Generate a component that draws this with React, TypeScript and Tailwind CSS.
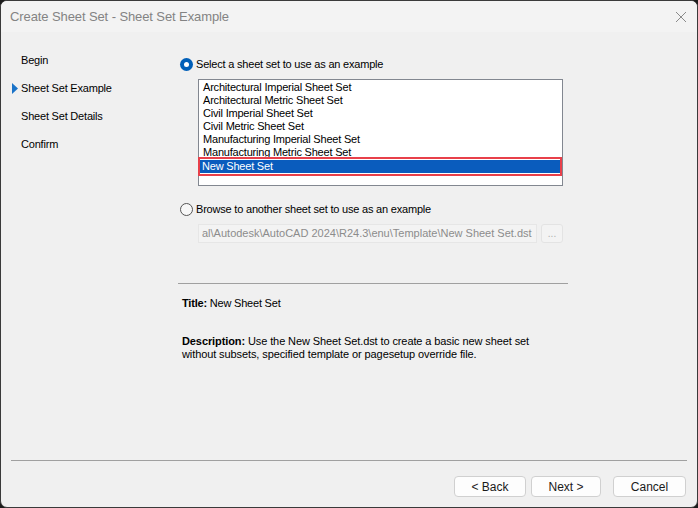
import React from "react";

const items = [
  "Architectural Imperial Sheet Set",
  "Architectural Metric Sheet Set",
  "Civil Imperial Sheet Set",
  "Civil Metric Sheet Set",
  "Manufacturing Imperial Sheet Set",
  "Manufacturing Metric Sheet Set",
  "New Sheet Set",
];

const steps = ["Begin", "Sheet Set Example", "Sheet Set Details", "Confirm"];

function Radio({ checked }: { checked?: boolean }) {
  if (checked) {
    return (
      <span className="w-[13px] h-[13px] rounded-full bg-[#005fb8] flex items-center justify-center shrink-0">
        <span className="w-[5px] h-[5px] rounded-full bg-white" />
      </span>
    );
  }
  return <span className="w-[13px] h-[13px] rounded-full border border-[#555] bg-[#f7f7f7] shrink-0" />;
}

function Btn({ w, children }: { w: string; children: React.ReactNode }) {
  return (
    <button
      className={`${w} h-[21px] rounded-[4px] border border-[#d0d0d0] bg-[#fdfdfd] text-[12px] text-[#1a1a1a] flex items-center justify-center`}
    >
      {children}
    </button>
  );
}

export default function App() {
  return (
    <div
      className="w-[698px] h-[508px] bg-[#1c1c1c] overflow-hidden"
      style={{ fontFamily: '"Liberation Sans", Arial, sans-serif' }}
    >
      <div className="w-full h-full rounded-[7px] border border-[#3a3a3a] bg-[#f0f0f0] flex flex-col overflow-hidden">
        <div className="h-[31px] bg-[#f3f3f3] flex items-center justify-between pl-[9px] pr-[8px] shrink-0">
          <span className="text-[13px] text-[#838383] tracking-[-0.1px]">Create Sheet Set - Sheet Set Example</span>
          <svg width="12" height="12" viewBox="0 0 12 12" className="mr-[2px]">
            <path d="M1 1 L11 11 M11 1 L1 11" stroke="#8a8a8a" strokeWidth="1" />
          </svg>
        </div>

        <div className="flex flex-1 min-h-0 tracking-[-0.2px]">
          <div className="w-[165px] shrink-0 pt-[21px] flex flex-col gap-[14px]">
            {steps.map((s, i) => (
              <div key={s} className="flex items-center h-[14px] text-[11px] text-black">
                <span className="w-[20px] flex justify-end pr-[3px]">
                  {i === 1 && (
                    <svg width="6" height="11" viewBox="0 0 6 11">
                      <path d="M0 0 L6 5.5 L0 11 Z" fill="#1a73c8" />
                    </svg>
                  )}
                </span>
                {s}
              </div>
            ))}
          </div>

          <div className="flex-1 pt-[25px] pl-[14px]">
            <div className="flex items-center gap-[3px] h-[14px] text-[11px]">
              <Radio checked />
              <span>Select a sheet set to use as an example</span>
            </div>

            <div className="ml-[18px] mt-[8px] w-[365px] h-[107px] border border-[#828790] bg-white pt-[1px] pl-[4px] pr-[1px]">
              {items.map((t, i) =>
                i === 6 ? (
                  <div key={t} className="relative -ml-[3px] mt-[1px]">
                    <div className="h-[13px] bg-[#0a5cbd] text-white text-[11px] leading-[13px] pl-[2px]">{t}</div>
                    <div className="absolute -left-[2px] -right-[1px] -top-[3px] -bottom-[3px] border-[2px] border-[#e8404a]" />
                  </div>
                ) : (
                  <div key={t} className="h-[13px] text-[11px] leading-[13px]">{t}</div>
                )
              )}
            </div>

            <div className="flex items-center gap-[3px] h-[14px] text-[11px] mt-[16px]">
              <Radio />
              <span>Browse to another sheet set to use as an example</span>
            </div>

            <div className="ml-[18px] mt-[8px] flex gap-[4px] tracking-normal">
              <div className="w-[339px] h-[19px] bg-[#f3f3f3] border border-[#e6e6e6] text-[11px] text-[#8c8c8c] leading-[17px] pl-[3px] whitespace-nowrap overflow-hidden">
                al\Autodesk\AutoCAD 2024\R24.3\enu\Template\New Sheet Set.dst
              </div>
              <div className="w-[22px] h-[19px] bg-[#f3f3f3] border border-[#e3e3e3] rounded-[3px] text-[10px] text-[#b0b0b0] flex items-center justify-center">
                ...
              </div>
            </div>

            <div className="h-px bg-[#a0a0a0] w-[390px] -ml-[2px] mt-[40px]" />

            <div className="mt-[11px] ml-[2px] text-[11px]">
              <span className="font-bold">Title:</span> New Sheet Set
            </div>

            <div className="mt-[23px] ml-[2px] text-[11px] leading-[13px] w-[370px] tracking-[-0.1px]">
              <span className="font-bold">Description:</span> Use the New Sheet Set.dst to create a basic new sheet set
              <br />
              without subsets, specified template or pagesetup override file.
            </div>
          </div>
        </div>

        <div className="h-px bg-[#a0a0a0] mx-[10px] shrink-0" />
        <div className="h-[46px] flex items-start justify-end pr-[11px] pt-[15px] shrink-0">
          <div className="flex gap-[5px]">
            <Btn w="w-[72px]">&lt; Back</Btn>
            <Btn w="w-[70px]">Next &gt;</Btn>
          </div>
          <div className="ml-[12px]">
            <Btn w="w-[73px]">Cancel</Btn>
          </div>
        </div>
      </div>
    </div>
  );
}
